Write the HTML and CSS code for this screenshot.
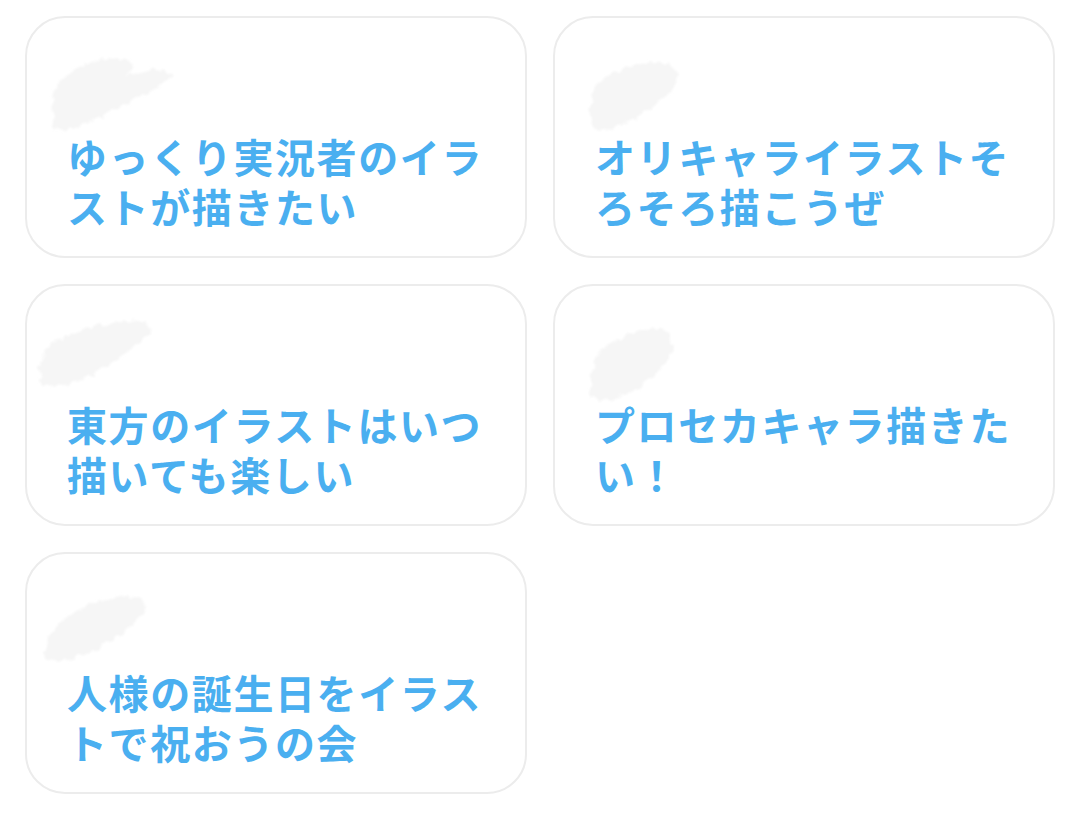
FILE: index.html
```html
<!DOCTYPE html>
<html lang="ja">
<head>
<meta charset="utf-8">
<title>イラスト</title>
<link rel="stylesheet" href="styles.css">
</head>
<body>
<svg class="defs" width="0" height="0" aria-hidden="true">
  <defs>
    <filter id="rough" x="-20%" y="-20%" width="140%" height="140%">
      <feTurbulence type="fractalNoise" baseFrequency="0.12" numOctaves="3" seed="4" result="n"/>
      <feDisplacementMap in="SourceGraphic" in2="n" scale="10" xChannelSelector="R" yChannelSelector="G" result="d"/>
      <feGaussianBlur in="d" stdDeviation="1.2"/>
    </filter>
  </defs>
</svg>
<div class="grid">
  <a class="card">
    <svg class="smudge" viewBox="0 0 150 90" aria-hidden="true"><path filter="url(#rough)" d="M14 80 C6 62 12 38 30 26 C48 14 70 10 86 14 C96 18 92 26 84 30 C100 26 118 22 130 26 C134 32 122 40 104 48 C86 58 66 66 48 76 C34 84 20 88 14 80 Z"/></svg>
    <span class="title">ゆっくり実況者のイラストが描きたい</span>
  </a>
  <a class="card">
    <svg class="smudge s2" viewBox="0 0 150 90" aria-hidden="true"><path filter="url(#rough)" d="M18 78 C10 62 16 40 34 28 C52 16 76 12 92 16 C106 20 104 34 92 46 C78 60 60 70 44 78 C32 84 22 86 18 78 Z"/></svg>
    <span class="title">オリキャライラストそろそろ描こうぜ</span>
  </a>
  <a class="card">
    <svg class="smudge s3" viewBox="0 0 150 90" aria-hidden="true"><path filter="url(#rough)" d="M8 70 C6 52 22 36 44 28 C66 20 92 16 112 18 C124 22 116 34 100 46 C84 58 62 70 40 80 C24 86 10 82 8 70 Z"/></svg>
    <span class="title">東方のイラストはいつ描いても楽しい</span>
  </a>
  <a class="card">
    <svg class="smudge s4" viewBox="0 0 150 90" aria-hidden="true"><path filter="url(#rough)" d="M16 82 C8 66 16 42 34 30 C52 18 74 12 88 16 C100 22 96 40 84 54 C72 68 56 78 40 84 C28 88 20 88 16 82 Z"/></svg>
    <span class="title">プロセカキャラ描きたい！</span>
  </a>
  <a class="card">
    <svg class="smudge s5" viewBox="0 0 150 90" aria-hidden="true"><path filter="url(#rough)" d="M10 74 C10 58 26 42 48 32 C68 22 90 18 104 22 C116 28 108 42 92 54 C76 66 58 76 40 82 C24 88 10 86 10 74 Z"/></svg>
    <span class="title">人様の誕生日をイラストで祝おうの会</span>
  </a>
</div>
</body>
</html>
```

FILE: styles.css
```css
html, body {
  margin: 0;
  padding: 0;
  background: #ffffff;
}

body {
  font-family: "Noto Sans CJK JP", "Noto Sans", sans-serif;
}

.defs {
  position: absolute;
  width: 0;
  height: 0;
}

.grid {
  display: grid;
  grid-template-columns: 502px 502px;
  column-gap: 26px;
  row-gap: 26px;
  padding: 16px 25px;
}

.card {
  position: relative;
  box-sizing: border-box;
  height: 242px;
  border: 2px solid #ececec;
  border-radius: 40px;
  background: #ffffff;
  display: flex;
  flex-direction: column;
  justify-content: flex-end;
  padding: 0 40px 25px 40px;
  text-decoration: none;
  overflow: hidden;
}

.smudge {
  position: absolute;
  left: 14px;
  top: 28px;
  width: 150px;
  height: 90px;
  fill: #f6f6f6;
}

.smudge.s2 { left: 20px; top: 30px; }
.smudge.s3 { left: 4px; top: 18px; }
.smudge.s4 { left: 22px; top: 28px; }
.smudge.s5 { left: 8px; top: 22px; }

.title {
  position: relative;
  display: block;
  font-size: 40px;
  font-weight: 700;
  line-height: 50px;
  letter-spacing: 1.6px;
  color: #4aaff0;
}
```
